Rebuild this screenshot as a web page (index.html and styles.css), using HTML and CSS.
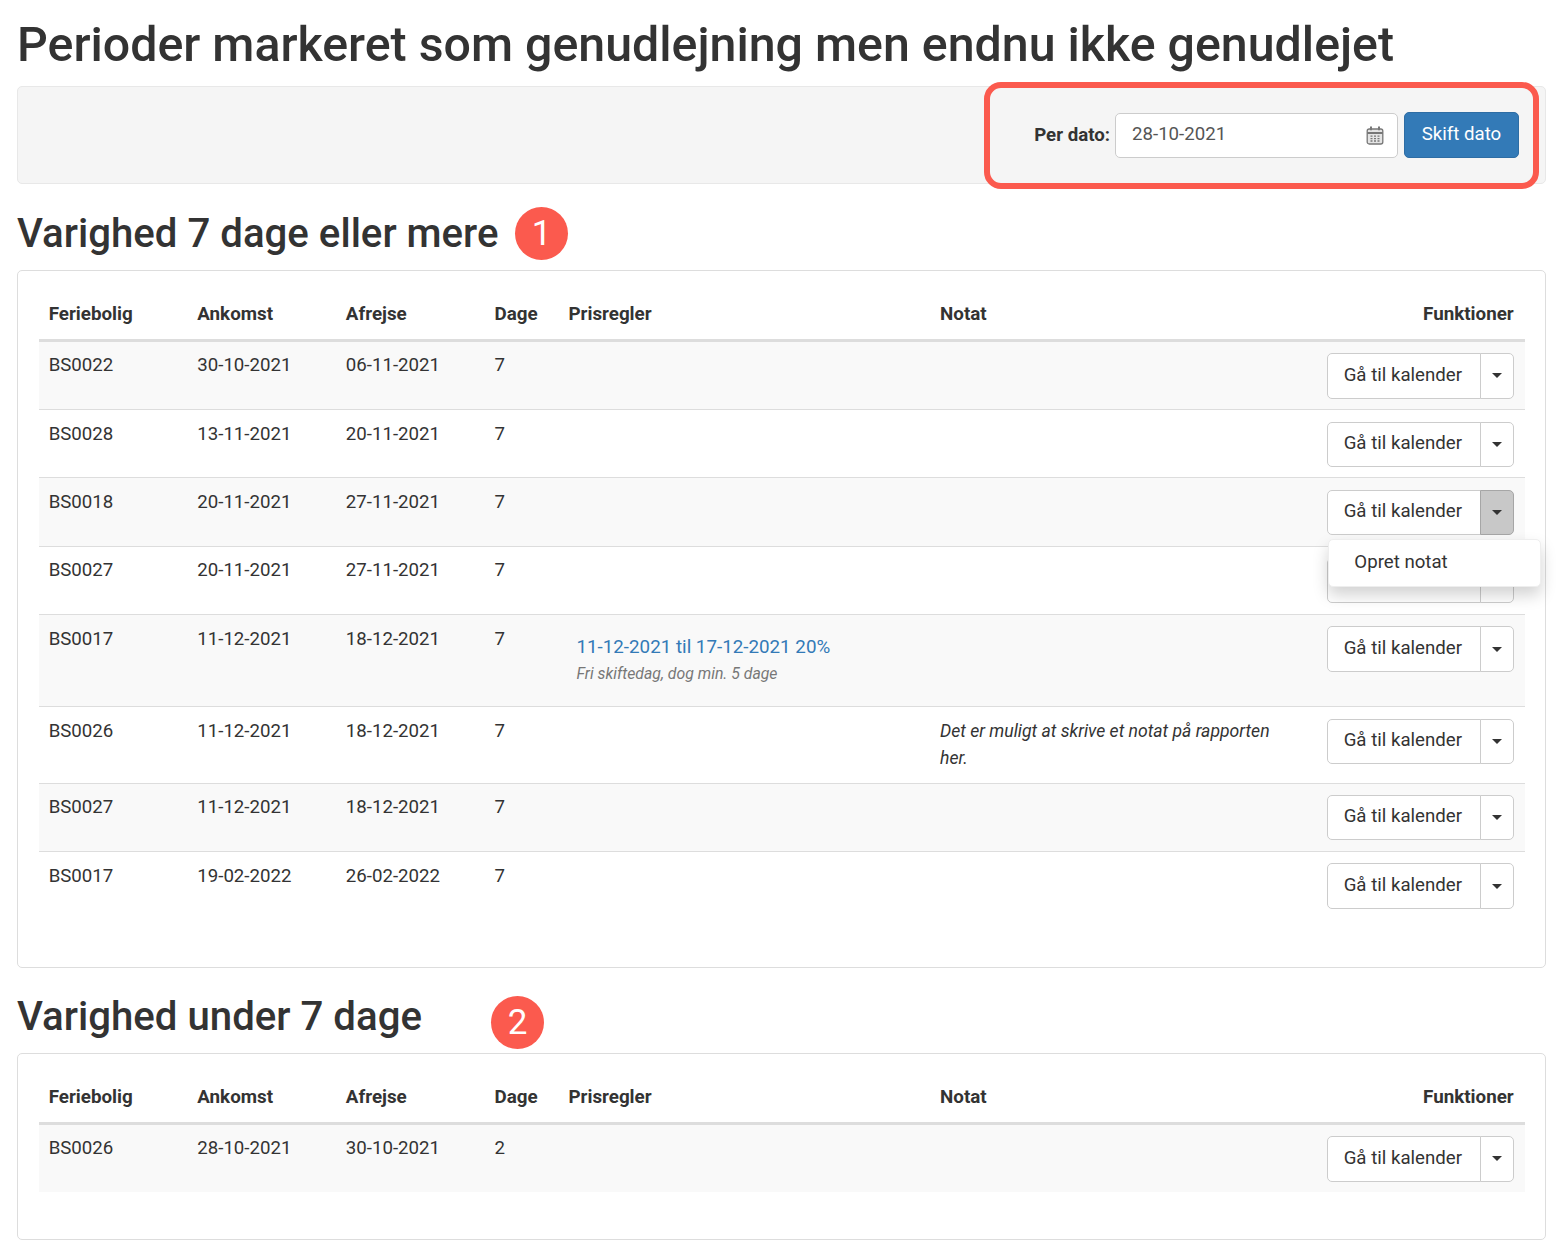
FILE: index.html
```html
<!DOCTYPE html>
<html lang="da">
<head>
<meta charset="utf-8">
<title>Perioder markeret som genudlejning</title>
<link rel="stylesheet" href="styles.css">
</head>
<body>
<h1>Perioder markeret som genudlejning men endnu ikke genudlejet</h1>
<div class="well">
  <form class="date-form">
    <label class="date-label">Per dato:</label>
    <div class="date-input">
      <span>28-10-2021</span>
      <svg class="cal" viewBox="0 0 18 19" width="18" height="19" fill="none" stroke="#777" stroke-width="1.3">
        <rect x="1.2" y="3" width="15.6" height="15" rx="2" fill="#e4e4e4"/>
        <path d="M1.2 7h15.6" stroke-width="2"/>
        <path d="M5 .6v3.6M13 .6v3.6" stroke-width="2"/>
        <path d="M4.5 10.2h9M4.5 12.6h9M4.5 15h9" stroke-dasharray="2 1.5"/>
      </svg>
    </div>
    <button type="button" class="btn-primary">Skift dato</button>
  </form>
  <div class="highlight"></div>
</div>

<h2><span>Varighed 7 dage eller mere</span><span class="badge badge-one">1</span></h2>
<div class="panel">
  <table>
    <colgroup><col class="c1"><col class="c2"><col class="c3"><col class="c4"><col class="c5"><col class="c6"><col class="c7"></colgroup>
    <thead><tr><th>Feriebolig</th><th>Ankomst</th><th>Afrejse</th><th>Dage</th><th>Prisregler</th><th>Notat</th><th class="right">Funktioner</th></tr></thead>
    <tbody>
      <tr><td>BS0022</td><td>30-10-2021</td><td>06-11-2021</td><td>7</td><td></td><td></td><td class="right"><div class="group"><button type="button" class="main">Gå til kalender</button><button type="button" class="drop"><i class="caret"></i></button></div></td></tr>
      <tr><td>BS0028</td><td>13-11-2021</td><td>20-11-2021</td><td>7</td><td></td><td></td><td class="right"><div class="group"><button type="button" class="main">Gå til kalender</button><button type="button" class="drop"><i class="caret"></i></button></div></td></tr>
      <tr><td>BS0018</td><td>20-11-2021</td><td>27-11-2021</td><td>7</td><td></td><td></td><td class="right"><div class="group"><button type="button" class="main">Gå til kalender</button><button type="button" class="drop open"><i class="caret"></i></button><div class="menu">Opret notat</div></div></td></tr>
      <tr><td>BS0027</td><td>20-11-2021</td><td>27-11-2021</td><td>7</td><td></td><td></td><td class="right"><div class="group"><button type="button" class="main covered">Gå til kalender</button><button type="button" class="drop"><i class="caret"></i></button></div></td></tr>
      <tr><td>BS0017</td><td>11-12-2021</td><td>18-12-2021</td><td>7</td><td><div class="rule"><a href="#">11-12-2021 til 17-12-2021 20%</a><small>Fri skiftedag, dog min. 5 dage</small></div></td><td></td><td class="right"><div class="group"><button type="button" class="main">Gå til kalender</button><button type="button" class="drop"><i class="caret"></i></button></div></td></tr>
      <tr><td>BS0026</td><td>11-12-2021</td><td>18-12-2021</td><td>7</td><td></td><td class="note">Det er muligt at skrive et notat på rapporten her.</td><td class="right"><div class="group"><button type="button" class="main">Gå til kalender</button><button type="button" class="drop"><i class="caret"></i></button></div></td></tr>
      <tr><td>BS0027</td><td>11-12-2021</td><td>18-12-2021</td><td>7</td><td></td><td></td><td class="right"><div class="group"><button type="button" class="main">Gå til kalender</button><button type="button" class="drop"><i class="caret"></i></button></div></td></tr>
      <tr><td>BS0017</td><td>19-02-2022</td><td>26-02-2022</td><td>7</td><td></td><td></td><td class="right"><div class="group"><button type="button" class="main">Gå til kalender</button><button type="button" class="drop"><i class="caret"></i></button></div></td></tr>
    </tbody>
  </table>
</div>

<h2 class="second"><span>Varighed under 7 dage</span><span class="badge badge-two">2</span></h2>
<div class="panel panel-short">
  <table>
    <colgroup><col class="c1"><col class="c2"><col class="c3"><col class="c4"><col class="c5"><col class="c6"><col class="c7"></colgroup>
    <thead><tr><th>Feriebolig</th><th>Ankomst</th><th>Afrejse</th><th>Dage</th><th>Prisregler</th><th>Notat</th><th class="right">Funktioner</th></tr></thead>
    <tbody>
      <tr><td>BS0026</td><td>28-10-2021</td><td>30-10-2021</td><td>2</td><td></td><td></td><td class="right"><div class="group"><button type="button" class="main">Gå til kalender</button><button type="button" class="drop"><i class="caret"></i></button></div></td></tr>
    </tbody>
  </table>
</div>
</body>
</html>
```

FILE: styles.css
```css
* { box-sizing: border-box; }
html, body { margin: 0; padding: 0; }
body {
  width: 1560px;
  height: 1256px;
  padding: 0 14px 0 17px;
  background: #fff;
  color: #333;
  font-family: Roboto, "Liberation Sans", sans-serif;
  font-size: 18.67px;
  line-height: 26.67px;
  overflow: hidden;
}
h1 {
  margin: 0;
  padding-top: 18px;
  height: 86px;
  font-size: 48.3px;
  line-height: 53px;
  font-weight: 500;
  color: #333;
  white-space: nowrap;
}
h2 {
  position: relative;
  margin: 0;
  padding-top: 28px;
  height: 86px;
  font-size: 40.2px;
  line-height: 44px;
  font-weight: 500;
  color: #333;
}
h2.second { height: 85px; padding-top: 27px; }
.well {
  position: relative;
  display: flex;
  justify-content: flex-end;
  align-items: center;
  height: 98px;
  padding-right: 26px;
  background: #f5f5f5;
  border: 1px solid #e8e8e8;
  border-radius: 5px;
}
.date-form { display: flex; align-items: center; }
.date-label { font-weight: 700; margin-right: 5px; color: #333; }
.date-input {
  display: flex;
  align-items: center;
  justify-content: space-between;
  width: 283px;
  height: 45px;
  padding: 0 13px 2px 16px;
  background: #fff;
  border: 1px solid #ccc;
  border-radius: 5px;
  color: #555;
}
.cal { display: block; margin-top: 2px; }
.btn-primary {
  width: 115px;
  height: 46px;
  margin-left: 6px;
  padding: 0 0 2px;
  border: 1px solid #2e6da4;
  border-radius: 5px;
  background: #337ab7;
  color: #fff;
  font: 400 18.67px/26.67px Roboto, sans-serif;
}
.highlight {
  position: absolute;
  left: 966px;
  top: -5px;
  width: 555px;
  height: 107px;
  border: 6px solid #fb5a4e;
  border-radius: 17px;
  pointer-events: none;
}
.badge {
  position: absolute;
  width: 53px;
  height: 53px;
  border-radius: 50%;
  background: #fb5a4e;
  color: #fff;
  font-size: 35px;
  font-weight: 400;
  line-height: 53px;
  text-align: center;
}
.badge-one { left: 498px; top: 23px; }
.badge-two { left: 474px; top: 28px; }
.panel {
  height: 698px;
  padding: 19px 20px 0 21px;
  background: #fff;
  border: 1px solid #ddd;
  border-radius: 5px;
}
.panel-short { height: 187px; }
table {
  width: 100%;
  table-layout: fixed;
  border-collapse: collapse;
  border-spacing: 0;
}
.c1, .c2, .c3 { width: 148.6px; }
.c4 { width: 74px; }
.c5 { width: 371.6px; }
.c6 { width: 372px; }
th, td {
  padding: 10.67px 10.67px 10.67px 9.67px;
  text-align: left;
  vertical-align: top;
}
th {
  padding-bottom: 11.5px;
  font-size: 18.8px;
  font-weight: 700;
  border-bottom: 3px solid #ddd;
}
th.right, td.right { text-align: right; }
th.right { padding-right: 11.3px; }
td { border-top: 1px solid #ddd; line-height: 27px; }
td.right { padding-top: 11.4px; padding-bottom: 10.6px; }
thead + tbody tr:first-child td { border-top: 0; }
tbody tr:nth-child(odd) td { background: #f9f9f9; }
.rule { padding: 8px 8px 7.67px; line-height: 26.67px; }
.rule a { display: block; font-size: 18.8px; color: #337ab7; text-decoration: none; white-space: nowrap; }
.rule small { display: block; margin-top: 1px; font-size: 15.8px; font-style: italic; color: #777; white-space: nowrap; }
.note { font-style: italic; font-size: 17.6px; }
.group {
  position: relative;
  display: inline-flex;
  vertical-align: top;
  height: 45.33px;
}
.group button {
  height: 100%;
  background: #fff;
  border: 1px solid #ccc;
  color: #333;
  font: 400 18.67px/26.67px Roboto, sans-serif;
}
.group .main { width: 154px; padding: 0 3px 2px 0; border-radius: 5px 0 0 5px; }
.group .main.covered { color: transparent; }
.group .drop {
  display: flex;
  align-items: center;
  justify-content: center;
  width: 34px;
  margin-left: -1px;
  padding: 0;
  border-radius: 0 5px 5px 0;
}
.group .drop.open { background: #c8c8c8; border-color: #a6a6a6; }
.caret {
  display: block;
  width: 0;
  height: 0;
  border-top: 5.3px solid #333;
  border-left: 5.3px solid transparent;
  border-right: 5.3px solid transparent;
}
.menu {
  position: absolute;
  top: 49px;
  left: 1px;
  z-index: 5;
  width: 213px;
  height: 48px;
  padding: 9px 25px;
  background: #fff;
  border: 1px solid #eee;
  border-radius: 5px;
  box-shadow: 0 8px 16px rgba(0, 0, 0, .18);
  text-align: left;
  color: #333;
}
```
